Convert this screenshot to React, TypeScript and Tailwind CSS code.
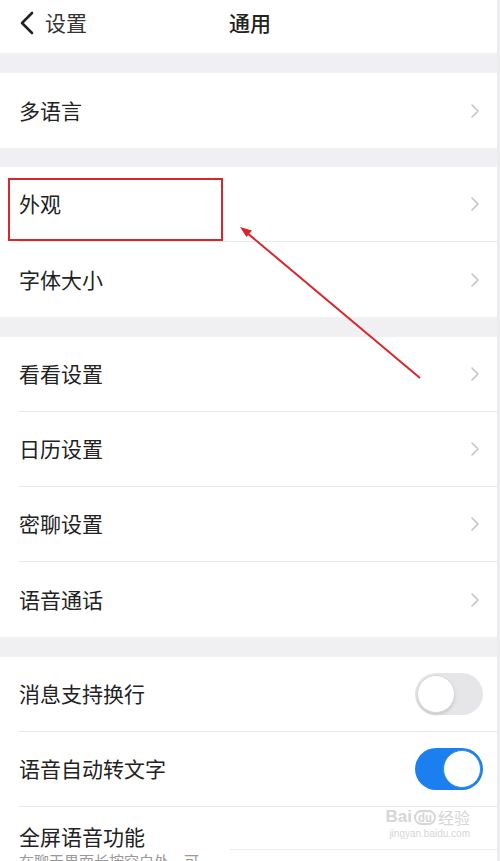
import React from "react";

type Item = { label: string; toggle?: "on" | "off" };

const groups: { gap: string; items: Item[] }[] = [
  { gap: "mt-[20px]", items: [{ label: "多语言" }] },
  { gap: "mt-[19px]", items: [{ label: "外观" }, { label: "字体大小" }] },
  {
    gap: "mt-[20px]",
    items: [{ label: "看看设置" }, { label: "日历设置" }, { label: "密聊设置" }, { label: "语音通话" }],
  },
  {
    gap: "mt-[20px]",
    items: [
      { label: "消息支持换行", toggle: "off" },
      { label: "语音自动转文字", toggle: "on" },
    ],
  },
];

function Chevron() {
  return (
    <svg width="10" height="16" viewBox="0 0 10 16" className="mr-[20px]">
      <path d="M2 2l6 6-6 6" fill="none" stroke="#c4c4c8" strokeWidth="1.6" strokeLinecap="round" strokeLinejoin="round" />
    </svg>
  );
}

function Toggle({ on }: { on: boolean }) {
  if (on) {
    return (
      <div className="mr-[17px] flex h-[42px] w-[68px] items-center justify-end rounded-full bg-[#1b7ff0] p-[2px]">
        <div className="h-[38px] w-[38px] rounded-full border border-[#3a8fe8] bg-white" />
      </div>
    );
  }
  return (
    <div className="mr-[17px] flex h-[42px] w-[68px] items-center rounded-full bg-[#e6e6e8] p-[2px]">
      <div className="h-[38px] w-[38px] rounded-full border border-[#d8d8d8] bg-white shadow-[0_2px_3px_rgba(0,0,0,0.12)]" />
    </div>
  );
}

function Row({ item, last }: { item: Item; last: boolean }) {
  return (
    <div className="flex h-[75px] bg-white pl-[19px]">
      <div className={`flex flex-1 items-center justify-between ${last ? "" : "border-b border-[#e8e8ea]"}`}>
        <span className="text-[21px] text-[#222]">{item.label}</span>
        {item.toggle ? <Toggle on={item.toggle === "on"} /> : <Chevron />}
      </div>
    </div>
  );
}

export default function App() {
  return (
    <div
      className="relative h-[861px] w-[500px] overflow-hidden bg-[#f0f0f2]"
      style={{ fontFamily: '"Noto Sans CJK SC", "Noto Sans", sans-serif' }}
    >
      <div className="flex h-[53px] items-start bg-white pt-[7px]">
        <div className="flex w-[130px] items-center pl-[18px]">
          <svg width="18" height="24" viewBox="0 0 18 24">
            <path d="M14 2L4 12l10 10" fill="none" stroke="#222" strokeWidth="2.6" strokeLinecap="round" strokeLinejoin="round" />
          </svg>
          <span className="ml-[9px] text-[21px] text-[#333]">设置</span>
        </div>
        <div className="flex-1 pr-[130px] text-center text-[21px] font-medium text-[#222]">通用</div>
      </div>

      <div className="flex flex-col">
        {groups.map((g, gi) => (
          <div key={gi} className={`flex flex-col ${g.gap}`}>
            {g.items.map((item, i) => (
              <Row key={item.label} item={item} last={i === g.items.length - 1 && gi !== 3} />
            ))}
            {gi === 3 && (
              <div className="flex h-[60px] flex-col bg-white pl-[19px] pt-[14px]">
                <span className="text-[21px] leading-[30px] text-[#222]">全屏语音功能</span>
                <span className="text-[15px] leading-[20px] text-[#999]">在聊天界面长按空白处，可</span>
              </div>
            )}
          </div>
        ))}
      </div>

      {/* annotation */}
      <div className="absolute left-[8px] top-[178px] h-[63px] w-[215px] border-2 border-[#d9262c]" />
      <svg className="absolute left-0 top-0" width="500" height="861" viewBox="0 0 500 861">
        <line x1="420" y1="378" x2="246" y2="232" stroke="#d9262c" strokeWidth="2" />
        <path d="M240 227l12 3.5-5.5 6.5z" fill="#d9262c" />
      </svg>

      {/* watermark */}
      <div className="absolute bottom-0 left-[230px] right-0 h-[12px] border-t border-[#ececec] bg-white" />
      <div className="absolute right-[30px] top-[808px] flex flex-col items-end text-[#d6d6d6]">
        <div className="flex items-end gap-[2px]">
          <span className="text-[17px] font-bold leading-none" style={{ fontFamily: '"Liberation Sans", sans-serif' }}>Bai</span>
          <span className="rounded-full border-2 border-[#d6d6d6] px-[2px] text-[11px] font-bold leading-none">du</span>
          <span className="text-[16px] leading-none">经验</span>
        </div>
        <span className="mt-[4px] text-[10px] leading-none" style={{ fontFamily: '"Liberation Sans", sans-serif' }}>jingyan.baidu.com</span>
      </div>
      <div className="absolute right-0 top-0 h-full w-[3px] bg-[#ececee]" />
    </div>
  );
}
